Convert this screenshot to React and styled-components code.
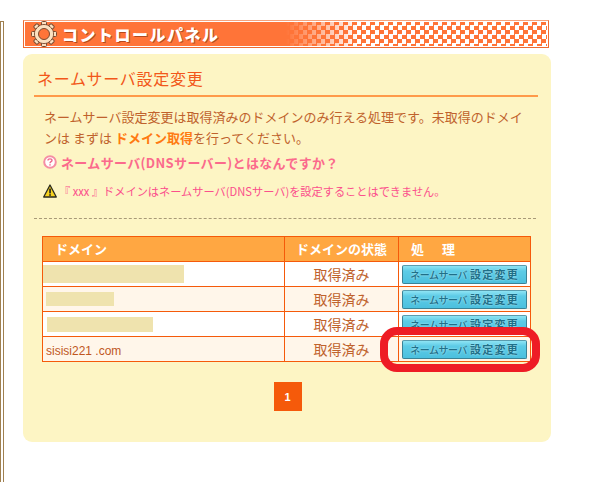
import React from "react";
import styled, { createGlobalStyle } from "styled-components";

const GlobalStyle = createGlobalStyle`
  html, body {
    margin: 0;
    padding: 0;
    background: #fff;
  }
  body {
    font-family: "Noto Sans CJK JP", "Liberation Sans", sans-serif;
    color: #c0622c;
  }
`;

const Page = styled.div`
  position: relative;
  width: 595px;
  height: 482px;
  overflow: hidden;
  display: flex;
  align-items: flex-start;
`;

const SideEdge = styled.div`
  flex: none;
  box-sizing: border-box;
  width: 4px;
  height: 461px;
  margin-top: 21px;
  border-top: 1px solid #a08050;
  border-right: 1px solid #a08050;
  background: linear-gradient(to right, #a08050 0 1px, #fff 1px);
`;

const Main = styled.main`
  flex: none;
  width: 528px;
  margin-left: 19px;
  padding-top: 20px;
`;

const TitleBar = styled.h1`
  box-sizing: border-box;
  width: 526px;
  height: 28px;
  margin: 0;
  display: flex;
  align-items: center;
  gap: 5px;
  padding-left: 7px;
  border: 1px solid #ee6a30;
  border-top-color: #f5a27c;
  box-shadow: inset 0 0 0 1px #fff;
  background-color: #ff7438;
  background-image:
    linear-gradient(to right, #ff7438 0, #ff7438 262px, transparent 335px),
    conic-gradient(#ff7438 25%, #fff 0 50%, #ff7438 0 75%, #fff 0);
  background-size: 100% 100%, 9px 9px;
  color: #fff;
  font-size: 16px;
  font-weight: 900;
  letter-spacing: 1.5px;
  text-shadow: 1px 1px 0 #b4491c;
`;

const Panel = styled.section`
  box-sizing: border-box;
  width: 528px;
  height: 388px;
  margin-top: 6px;
  padding: 13px 13px 0 11px;
  background: #fdf5c4;
  border-radius: 9px;
  display: flex;
  flex-direction: column;
`;

const Heading = styled.h2`
  margin: 0;
  height: 28px;
  padding-left: 3px;
  border-bottom: 2px solid #ff9a4a;
  color: #f2581a;
  font-size: 16px;
  font-weight: 400;
  letter-spacing: 0.7px;
  line-height: 22px;
`;

const Intro = styled.p`
  margin: 9px 0 0 10px;
  width: 490px;
  font-size: 13px;
  line-height: 21px;
  color: #c0622c;
`;

const Accent = styled.a`
  color: #ff7a12;
  font-weight: 700;
  margin: 0 0 0 3px;
`;

const HelpRow = styled.div`
  display: flex;
  align-items: center;
  gap: 4px;
  margin: 6px 0 0 9px;
  height: 16px;
  color: #fb6a8c;
  font-size: 13px;
  font-weight: 700;
  letter-spacing: 0.35px;
`;

const WarnRow = styled.div`
  display: flex;
  align-items: center;
  gap: 2px;
  margin: 13px 0 0 9px;
  height: 16px;
  color: #fb4f8c;
  font-size: 11.2px;
`;

const Dashed = styled.hr`
  margin: 19px 0 0 0;
  width: 502px;
  border: 0;
  border-top: 1px dashed #a89a78;
`;

const Table = styled.table`
  box-sizing: border-box;
  width: 488px;
  margin: 17px 0 0 8px;
  border-collapse: collapse;
  table-layout: fixed;
  font-size: 14px;
`;

const Th = styled.th`
  height: 23px;
  padding: 0 0 1px ${(p) => p.$pad || 0}px;
  border: 1px solid #f55a0a;
  background: #ffa742;
  color: #fff;
  font-size: 13px;
  font-weight: 700;
  text-align: ${(p) => (p.$pad ? "left" : "center")};
  word-spacing: ${(p) => p.$spread || 0}px;
`;

const Row = styled.tr`
  background: ${(p) => (p.$even ? "#fff6ea" : "#fff")};
`;

const Td = styled.td`
  height: 24px;
  padding: 0;
  border: 1px solid #f55a0a;
  text-align: ${(p) => (p.$center ? "center" : "left")};
  color: #c0622c;
`;

const Domain = styled.span`
  margin-left: 3px;
  font-family: "Liberation Sans", sans-serif;
  font-size: 12px;
  color: #c0561f;
`;

const Redacted = styled.div`
  width: ${(p) => p.$w}px;
  height: ${(p) => p.$h}px;
  margin-left: ${(p) => p.$x}px;
  background: #efe3ae;
`;

const ActionButton = styled.button`
  box-sizing: border-box;
  display: flex;
  align-items: center;
  justify-content: center;
  gap: 3px;
  width: 125px;
  height: 19px;
  margin: 0 auto;
  padding: 0;
  border: 1px solid #3a8296;
  border-top-color: #5a9cae;
  border-radius: 2px;
  background: linear-gradient(#8fe4f4, #5ccbe6 30%, #4cc0de);
  color: #1f6f88;
  font-family: inherit;
  white-space: nowrap;
  text-shadow: 0 0 2px #c4f2f8;
`;

const ButtonKana = styled.span`
  font-size: 10px;
  font-weight: 500;
  letter-spacing: -0.45px;
`;

const ButtonKanji = styled.span`
  font-size: 11px;
  font-weight: 700;
  letter-spacing: 1.2px;
`;

const Pager = styled.nav`
  display: flex;
  justify-content: center;
  margin: 20px 0 0 3px;
`;

const PageNumber = styled.span`
  width: 28px;
  height: 29px;
  display: flex;
  align-items: center;
  justify-content: center;
  background: #f55a0a;
  color: #fff;
  font-family: "Liberation Sans", sans-serif;
  font-size: 11px;
  font-weight: 700;
`;

const Callout = styled.svg`
  position: absolute;
  left: 380px;
  top: 327px;
`;

const Gear = () => (
  <svg width="26" height="26" viewBox="0 0 26 26" aria-hidden="true">
    <g fill="#fbe0c0" stroke="#7a4a30" strokeWidth="1">
      {[0, 45, 90, 135, 180, 225, 270, 315].map((a) => (
        <rect key={a} x="10.5" y="0.5" width="5" height="6" rx="1" transform={`rotate(${a} 13 13)`} />
      ))}
      <circle cx="13" cy="13" r="9.5" />
    </g>
    <circle cx="13" cy="13" r="9" fill="#fbe0c0" />
    <circle cx="13" cy="13" r="5.5" fill="#ff7438" stroke="#7a4a30" />
  </svg>
);

const HelpIcon = () => (
  <svg width="14" height="14" viewBox="0 0 14 14" aria-hidden="true">
    <circle cx="7" cy="7" r="5.8" fill="#fff" stroke="#f58ea4" strokeWidth="2" />
    <path d="M5 5.4C5 3.4 9 3.4 9 5.4C9 6.8 7 6.6 7 8.2" fill="none" stroke="#ef6a8a" strokeWidth="1.4" />
    <rect x="6.3" y="9.2" width="1.4" height="1.4" fill="#ef6a8a" />
  </svg>
);

const WarnIcon = () => (
  <svg width="14" height="14" viewBox="0 0 14 14" aria-hidden="true">
    <path d="M7 1L13.3 13H0.7Z" fill="#f7d21e" stroke="#2a2a20" strokeWidth="1.3" strokeLinejoin="round" />
    <rect x="6.2" y="4.6" width="1.7" height="4.8" fill="#2a2a20" />
    <rect x="6.2" y="10.2" width="1.7" height="1.6" fill="#2a2a20" />
  </svg>
);

const rows = [
  { redact: { w: 141, h: 18, x: 0 } },
  { redact: { w: 68, h: 14, x: 3 } },
  { redact: { w: 106, h: 15, x: 4 } },
  { name: "sisisi221 .com" },
];

export default function App() {
  return (
    <Page>
      <GlobalStyle />
      <SideEdge />
      <Main>
        <TitleBar>
          <Gear />
          コントロールパネル
        </TitleBar>
        <Panel>
          <Heading>ネームサーバ設定変更</Heading>
          <Intro>
            ネームサーバ設定変更は取得済みのドメインのみ行える処理です。未取得のドメイ
            <br />
            ンは まずは
            <Accent>ドメイン取得</Accent>を行ってください。
          </Intro>
          <HelpRow>
            <HelpIcon />
            ネームサーバ(DNSサーバー)とはなんですか？
          </HelpRow>
          <WarnRow>
            <WarnIcon />
            『 xxx 』ドメインはネームサーバ(DNSサーバ)を設定することはできません。
          </WarnRow>
          <Dashed />
          <Table>
            <colgroup>
              <col style={{ width: 242 }} />
              <col style={{ width: 114 }} />
              <col style={{ width: 132 }} />
            </colgroup>
            <thead>
              <tr>
                <Th $pad={12}>ドメイン</Th>
                <Th>ドメインの状態</Th>
                <Th $pad={12} $spread={15}>処 理</Th>
              </tr>
            </thead>
            <tbody>
              {rows.map((row, i) => (
                <Row key={i} $even={i % 2 === 1}>
                  <Td>
                    {row.redact ? (
                      <Redacted $w={row.redact.w} $h={row.redact.h} $x={row.redact.x} />
                    ) : (
                      <Domain>{row.name}</Domain>
                    )}
                  </Td>
                  <Td $center>取得済み</Td>
                  <Td>
                    <ActionButton>
                      <ButtonKana>ネームサーバ</ButtonKana>
                      <ButtonKanji>設定変更</ButtonKanji>
                    </ActionButton>
                  </Td>
                </Row>
              ))}
            </tbody>
          </Table>
          <Pager>
            <PageNumber>1</PageNumber>
          </Pager>
        </Panel>
      </Main>
      <Callout width="160" height="45" viewBox="0 0 160 45" aria-hidden="true">
        <rect x="4" y="4" width="152" height="37" rx="13" fill="none" stroke="#ee1c25" strokeWidth="8" />
      </Callout>
    </Page>
  );
}
